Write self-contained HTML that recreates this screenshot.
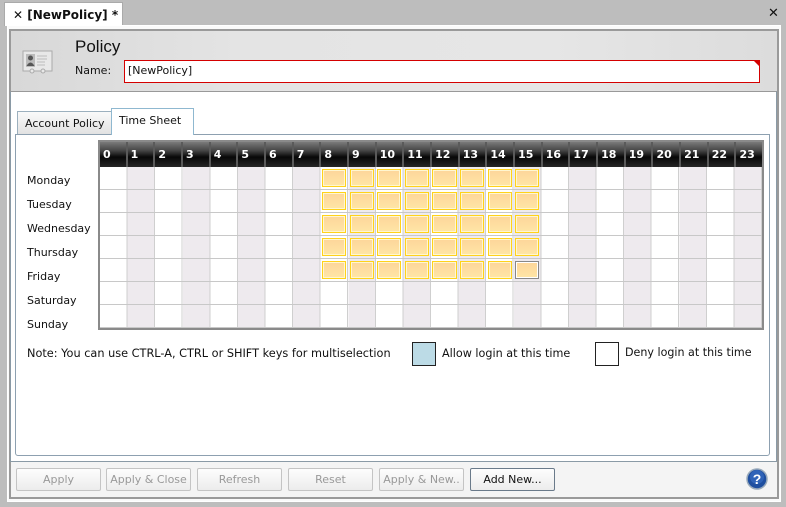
<!DOCTYPE html>
<html><head><meta charset="utf-8"><style>
*{box-sizing:border-box;margin:0;padding:0}
body{width:786px;height:507px;background:#bdbdbd;font-family:"DejaVu Sans","Liberation Sans",sans-serif;font-size:11px;color:#111;position:relative;overflow:hidden}
.a{position:absolute}
.tab{left:4px;top:2px;width:119px;height:24px;background:#fff;border:1px solid #aaa;border-bottom:none;font-weight:bold;font-size:12px;padding:5px 0 0 8px}
.outer{left:7px;top:25px;width:774px;height:477px;background:#fafafa;border:1px solid #fff}
.panel{left:9px;top:29px;width:770px;height:470px;border:2px solid #9a9a9a;background:#f4f4f4}
.hdr{left:11px;top:31px;width:766px;height:60px;background:linear-gradient(90deg,#d8d8d8,#e4e4e4 30%,#e6e6e6 70%,#dcdcdc)}
.content{left:10px;top:91px;width:767px;height:371px;background:#fff;border:1px solid #8a9aa6;border-top-color:#999}
.tp{left:15px;top:134px;width:755px;height:322px;border:1px solid #8da0b0;border-radius:0 0 3px 3px;background:#fff}
.t1{left:17px;top:111px;width:95px;height:23px;border:1px solid #9cb0be;border-bottom:none;background:linear-gradient(#fafafa,#e2e2e2);padding:5px 0 0 7px}
.t2{left:111px;top:108px;width:83px;height:27px;border:1px solid #8fb8d0;border-bottom:none;background:#fff;padding:5px 0 0 7px}
.grid{left:98px;top:140px;width:666px;height:190px;border:2px solid #8a8a8a}
.gh{left:100px;top:142px;width:662px;height:25px;display:flex;background:#111}
.gh span{flex:1;border-right:2px solid #5a5a5a;background:linear-gradient(#7a7a7a,#444 35%,#080808 60%,#262626);color:#fff;font-weight:bold;font-size:11px;padding:6px 0 0 3px}
.gb{left:100px;top:167px;width:662px;height:161px;background:
repeating-linear-gradient(180deg,transparent 0 22px,#c8c8c8 22px 23px),
repeating-linear-gradient(90deg,transparent 0 26.58px,#cfcfcf 26.58px 27.58px),
repeating-linear-gradient(90deg,#fff 0 27.58px,#eeeaee 27.58px 55.17px)}
.sel{left:320.6px;top:167px;width:220.7px;height:115px;display:grid;grid-template-columns:repeat(8,1fr);grid-template-rows:repeat(5,23px)}
.sel div{margin:2px 2px 3px 1.5px;border:1px solid #ffd21a;box-shadow:inset 0 0 0 1px #fff6d0;background:linear-gradient(#fdd59a,#fee6a6)}
.sel div.f{border-color:#888;box-shadow:inset 0 0 0 1px #fff}
.day{left:27px}
.btn{top:468px;height:23px;width:85px;border:1px solid #c4c4c4;border-radius:2px;background:linear-gradient(#fdfdfd,#ececec);color:#999;text-align:center;padding-top:4px}
</style></head><body>
<div class="a tab">✕ [NewPolicy] *</div>
<div class="a" style="left:768px;top:6px;font-size:13px;font-weight:bold">✕</div>
<div class="a outer"></div>
<div class="a panel"></div>
<div class="a hdr"></div>
<svg class="a" style="left:22px;top:50px" width="32" height="24" viewBox="0 0 32 24"><rect x="1" y="1" width="29" height="20" fill="#e8e8e8" stroke="#aaa"/><rect x="4" y="4" width="9" height="13" fill="#bbb"/><circle cx="8.5" cy="8" r="2.5" fill="#555"/><path d="M4.5 16 q4-7 8 0z" fill="#555"/><path d="M15 6h10M15 9h10M15 12h8M15 15h8" stroke="#bbb"/><circle cx="10" cy="21" r="2" fill="#e8e8e8" stroke="#aaa"/><circle cx="21" cy="21" r="2" fill="#e8e8e8" stroke="#aaa"/></svg>
<div class="a" style="left:75px;top:37px;font-size:17px;font-family:'Liberation Sans',sans-serif">Policy</div>
<div class="a" style="left:75px;top:64px">Name:</div>
<div class="a" style="left:124px;top:60px;width:636px;height:23px;border:1px solid #d40000;background:#fff;padding:3px 0 0 3px">[NewPolicy]</div>
<svg class="a" style="left:753px;top:60px" width="7" height="7"><path d="M0 0h7v7z" fill="#d40000"/></svg>
<div class="a content"></div>
<div class="a tp"></div>
<div class="a t1">Account Policy</div>
<div class="a t2">Time Sheet</div>
<div class="a grid"></div>
<div class="a gh"><span>0</span><span>1</span><span>2</span><span>3</span><span>4</span><span>5</span><span>6</span><span>7</span><span>8</span><span>9</span><span>10</span><span>11</span><span>12</span><span>13</span><span>14</span><span>15</span><span>16</span><span>17</span><span>18</span><span>19</span><span>20</span><span>21</span><span>22</span><span style="border-right:none">23</span></div>
<div class="a gb"></div>
<div class="a sel">
<div></div><div></div><div></div><div></div><div></div><div></div><div></div><div></div>
<div></div><div></div><div></div><div></div><div></div><div></div><div></div><div></div>
<div></div><div></div><div></div><div></div><div></div><div></div><div></div><div></div>
<div></div><div></div><div></div><div></div><div></div><div></div><div></div><div></div>
<div></div><div></div><div></div><div></div><div></div><div></div><div></div><div class="f"></div>
</div>
<div class="a day" style="top:174px">Monday</div>
<div class="a day" style="top:198px">Tuesday</div>
<div class="a day" style="top:222px">Wednesday</div>
<div class="a day" style="top:246px">Thursday</div>
<div class="a day" style="top:270px">Friday</div>
<div class="a day" style="top:294px">Saturday</div>
<div class="a day" style="top:318px">Sunday</div>
<div class="a" style="left:27px;top:347px;font-size:11.3px">Note: You can use CTRL-A, CTRL or SHIFT keys for multiselection</div>
<div class="a" style="left:412px;top:342px;width:24px;height:24px;border:1px solid #222;background:#bcdbe6"></div>
<div class="a" style="left:442px;top:347px;font-size:11.2px">Allow login at this time</div>
<div class="a" style="left:595px;top:342px;width:24px;height:24px;border:1px solid #222;background:#fff"></div>
<div class="a" style="left:625px;top:346px;font-size:11.1px">Deny login at this time</div>
<div class="a btn" style="left:16px">Apply</div>
<div class="a btn" style="left:106px">Apply &amp; Close</div>
<div class="a btn" style="left:197px">Refresh</div>
<div class="a btn" style="left:288px">Reset</div>
<div class="a btn" style="left:379px">Apply &amp; New..</div>
<div class="a btn" style="left:470px;color:#111;border-color:#6a7a8a">Add New...</div>
<svg class="a" style="left:746px;top:468px" width="22" height="22"><circle cx="11" cy="11" r="10" fill="#1f4fa0" stroke="#9ab" stroke-width="1.5"/><circle cx="11" cy="9" r="7" fill="#3a72c8" opacity=".6"/><text x="11" y="16" font-family="Liberation Sans" font-weight="bold" font-size="14" fill="#fff" text-anchor="middle">?</text></svg>
</body></html>
